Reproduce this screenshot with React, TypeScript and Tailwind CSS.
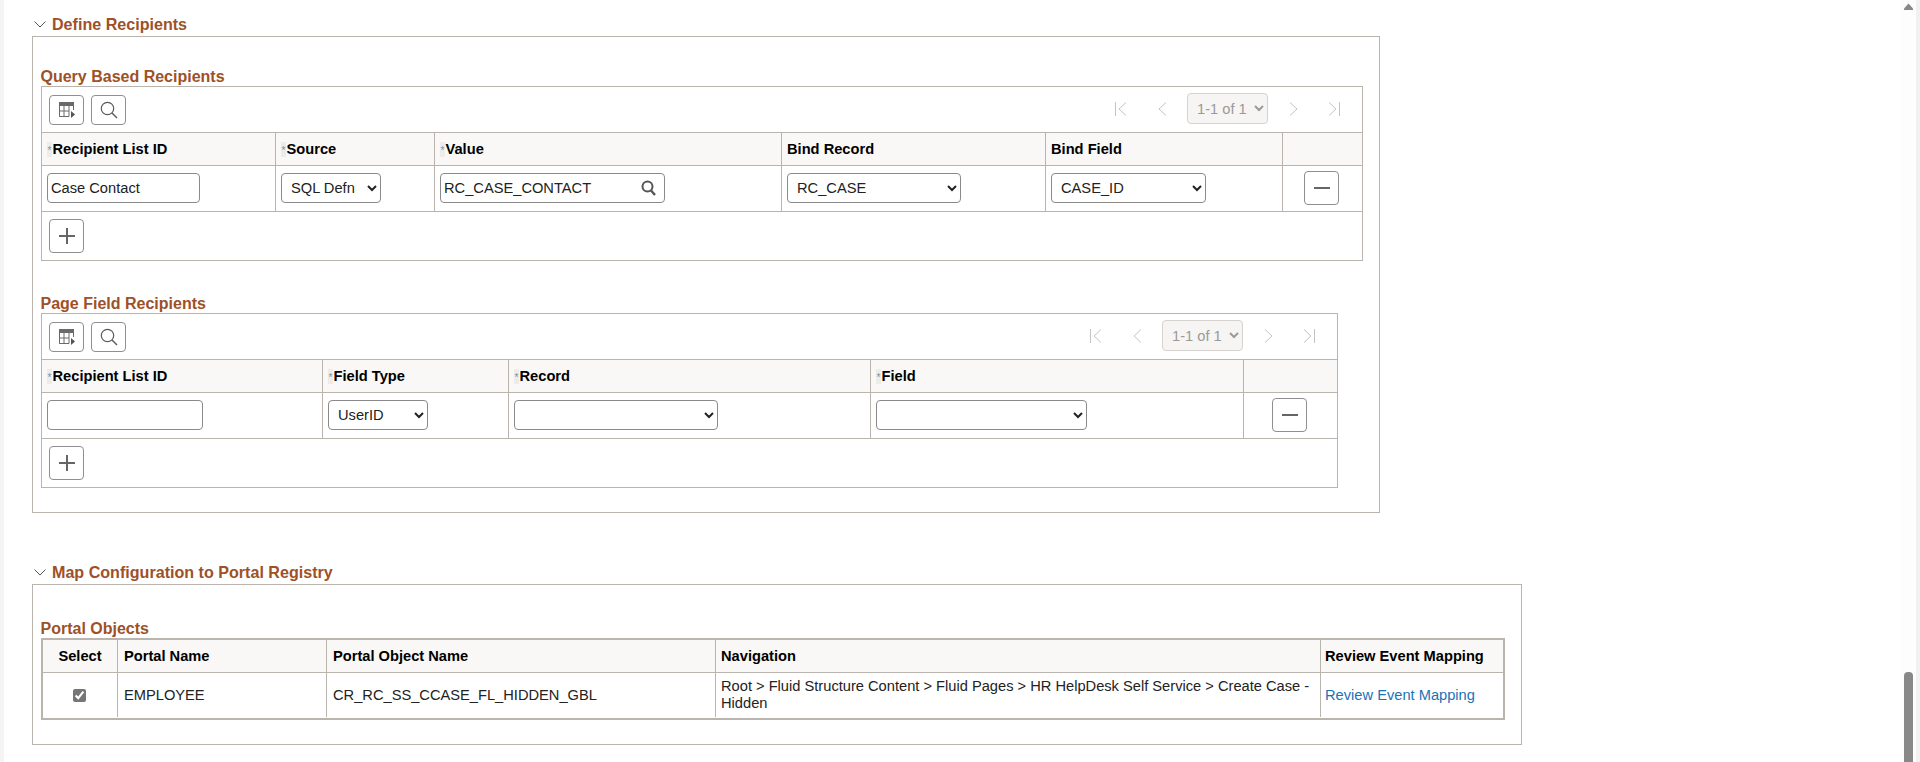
const font = { fontFamily: '"Liberation Sans", Arial, sans-serif' };

function SectionHeader({ title }: { title: string }) {
    return (
        <div className="flex h-[22px] items-center pb-[2px] pl-[30px]">
            <svg width="12" height="7" viewBox="0 0 12 7" fill="none">
                <path d="M0.5 0.5L6 6L11.5 0.5" stroke="#555" strokeWidth="1" />
            </svg>
            <span className="ml-[6px] text-[16.1px] font-bold leading-[20px] text-[#9e5127]">{title}</span>
        </div>
    );
}

function GroupTitle({ title }: { title: string }) {
    return (
        <div className="ml-[7.5px] h-[20px] text-[16px] font-bold leading-[22px] text-[#9e5127]">{title}</div>
    );
}

function IconButton({ children, className = '' }: { children: React.ReactNode; className?: string }) {
    return (
        <button
            type="button"
            className={`flex w-[35px] items-center justify-center rounded-[4px] border border-[#8f8f8f] bg-white ${className}`}
        >
            {children}
        </button>
    );
}

function GridIcon() {
    return (
        <svg width="16" height="16" viewBox="0 0 16 16" fill="none">
            <rect x="0" y="0" width="15" height="4" fill="#6a6a6a" />
            <path
                d="M0.5 4V14.5H10M0.5 9H10M0.5 14.5H10M5 4V14.5M10 4V14.5M14.5 4V8"
                stroke="#6a6a6a"
                strokeWidth="1"
            />
            <path d="M12 9L16 12.5L12 16Z" fill="#555" />
        </svg>
    );
}

function LensIcon() {
    return (
        <svg width="18" height="18" viewBox="0 0 18 18" fill="none">
            <circle cx="7.5" cy="7.5" r="6.2" stroke="#5a5a5a" strokeWidth="1.2" />
            <path d="M12 12L17 17" stroke="#5a5a5a" strokeWidth="1.4" />
        </svg>
    );
}

function Pager() {
    const stroke = '#c4c4c4';
    return (
        <div className="ml-auto mr-[22px] mt-[6px] flex items-start">
            <svg width="12" height="14" viewBox="0 0 12 14" fill="none" className="mt-[9px]">
                <path d="M0.5 0V14M11 0.5L4 7L11 13.5" stroke={stroke} />
            </svg>
            <svg width="12" height="14" viewBox="0 0 12 14" fill="none" className="ml-[29px] mt-[9px]">
                <path d="M10 0.5L3 7L10 13.5" stroke={stroke} />
            </svg>
            <select
                disabled
                defaultValue="1-1 of 1"
                className="ml-[19px] h-[31px] w-[81px] rounded-[4px] border border-[#d6d3ce] bg-[#f6f5f3] pl-[5px] text-[#9a9a9a] opacity-100"
            >
                <option>1-1 of 1</option>
            </select>
            <svg width="12" height="14" viewBox="0 0 12 14" fill="none" className="ml-[20px] mt-[9px]">
                <path d="M2 0.5L9 7L2 13.5" stroke={stroke} />
            </svg>
            <svg width="12" height="14" viewBox="0 0 12 14" fill="none" className="ml-[28px] mt-[9px]">
                <path d="M1 0.5L8 7L1 13.5M11.5 0V14" stroke={stroke} />
            </svg>
        </div>
    );
}

function Toolbar() {
    return (
        <div className="flex h-[46px] items-start border-b border-[#b9b5ae] pl-[7px]">
            <div className="mt-[8px] flex gap-[7px]">
                <IconButton className="h-[30px]">
                    <GridIcon />
                </IconButton>
                <IconButton className="h-[30px]">
                    <LensIcon />
                </IconButton>
            </div>
            <Pager />
        </div>
    );
}

function HeadCell({ label, required, last }: { label?: string; required?: boolean; last?: boolean }) {
    return (
        <div className={`flex items-center bg-[#f9f8f6] pl-[5px] ${last ? '' : 'border-r border-[#b9b5ae]'}`}>
            {required && (
                <span className="mr-[0.5px] flex h-[15px] w-[5px] justify-center bg-[#eeece9] pt-[3px] text-[10px] leading-[12px] text-[#6f93b8]">
                    *
                </span>
            )}
            {label && <span className="font-bold text-black">{label}</span>}
        </div>
    );
}

function BodyCell({ children, last }: { children?: React.ReactNode; last?: boolean }) {
    return (
        <div
            className={
                last
                    ? 'flex items-center justify-center pb-[1px] pr-[2px]'
                    : 'flex items-center border-r border-[#b9b5ae] pb-[1px] pl-[5px]'
            }
        >
            {children}
        </div>
    );
}

function Dropdown({ value, className }: { value: string; className: string }) {
    return (
        <select
            defaultValue={value}
            className={`h-[30px] rounded-[4px] border border-[#8a8a8a] bg-white pl-[5px] text-[#222] ${className}`}
        >
            <option>{value}</option>
        </select>
    );
}

function TextField({ value, className }: { value: string; className: string }) {
    return (
        <input
            readOnly
            value={value}
            className={`h-[30px] rounded-[4px] border border-[#8a8a8a] bg-white pl-[3px] text-[#222] outline-none ${className}`}
        />
    );
}

function RemoveButton() {
    return (
        <IconButton className="h-[34px]">
            <span className="block h-[2px] w-[16px] bg-[#666]" />
        </IconButton>
    );
}

function AddRow() {
    return (
        <div className="h-[48px] pl-[7px] pt-[7px]">
            <IconButton className="h-[34px]">
                <svg width="16" height="16" viewBox="0 0 16 16" fill="none">
                    <path d="M8 0V16M0 8H16" stroke="#666" strokeWidth="2" />
                </svg>
            </IconButton>
        </div>
    );
}

function QueryTable() {
    return (
        <div className="ml-[8px] w-[1322px] border border-[#b9b5ae]">
            <Toolbar />
            <div className="grid h-[33px] grid-cols-[234px_159px_347px_264px_237px_1fr] border-b border-[#b9b5ae]">
                <HeadCell label="Recipient List ID" required />
                <HeadCell label="Source" required />
                <HeadCell label="Value" required />
                <HeadCell label="Bind Record" />
                <HeadCell label="Bind Field" />
                <HeadCell last />
            </div>
            <div className="grid h-[46px] grid-cols-[234px_159px_347px_264px_237px_1fr] border-b border-[#b9b5ae]">
                <BodyCell>
                    <TextField value="Case Contact" className="w-[153px]" />
                </BodyCell>
                <BodyCell>
                    <Dropdown value="SQL Defn" className="w-[100px]" />
                </BodyCell>
                <BodyCell>
                    <div className="flex h-[30px] w-[225px] items-center rounded-[4px] border border-[#8a8a8a] pr-[8px]">
                        <input readOnly value="RC_CASE_CONTACT" className="min-w-0 flex-1 pl-[3px] text-[#222] outline-none" />
                        <svg width="15" height="16" viewBox="0 0 15 16" fill="none">
                            <circle cx="6.5" cy="6.5" r="5" stroke="#555" strokeWidth="2" />
                            <path d="M10 10.5L14 15" stroke="#555" strokeWidth="2.4" />
                        </svg>
                    </div>
                </BodyCell>
                <BodyCell>
                    <Dropdown value="RC_CASE" className="w-[174px]" />
                </BodyCell>
                <BodyCell>
                    <Dropdown value="CASE_ID" className="w-[155px]" />
                </BodyCell>
                <BodyCell last>
                    <RemoveButton />
                </BodyCell>
            </div>
            <AddRow />
        </div>
    );
}

function PageFieldTable() {
    return (
        <div className="ml-[8px] w-[1297px] border border-[#b9b5ae]">
            <Toolbar />
            <div className="grid h-[33px] grid-cols-[281px_186px_362px_373px_1fr] border-b border-[#b9b5ae]">
                <HeadCell label="Recipient List ID" required />
                <HeadCell label="Field Type" required />
                <HeadCell label="Record" required />
                <HeadCell label="Field" required />
                <HeadCell last />
            </div>
            <div className="grid h-[46px] grid-cols-[281px_186px_362px_373px_1fr] border-b border-[#b9b5ae]">
                <BodyCell>
                    <TextField value="" className="w-[156px]" />
                </BodyCell>
                <BodyCell>
                    <Dropdown value="UserID" className="w-[100px]" />
                </BodyCell>
                <BodyCell>
                    <Dropdown value="" className="w-[204px]" />
                </BodyCell>
                <BodyCell>
                    <Dropdown value="" className="w-[211px]" />
                </BodyCell>
                <BodyCell last>
                    <RemoveButton />
                </BodyCell>
            </div>
            <AddRow />
        </div>
    );
}

function PortalTable() {
    const cols = 'grid grid-cols-[75px_209px_389px_605px_1fr]';
    return (
        <div className="ml-[8px] w-[1464px] border-2 border-[#b9b5ae]">
            <div className={`${cols} h-[33px] border-b border-[#b9b5ae] bg-[#f9f8f6] font-bold text-black`}>
                <div className="flex items-center justify-center border-r border-[#b9b5ae]">Select</div>
                <div className="flex items-center border-r border-[#b9b5ae] pl-[6px]">Portal Name</div>
                <div className="flex items-center border-r border-[#b9b5ae] pl-[6px]">Portal Object Name</div>
                <div className="flex items-center border-r border-[#b9b5ae] pl-[5px]">Navigation</div>
                <div className="flex items-center pl-[4px]">Review Event Mapping</div>
            </div>
            <div className={`${cols} h-[45px] pb-[1px] text-[#222]`}>
                <div className="flex items-center justify-center border-r border-[#b9b5ae] pr-[1px]">
                    <input type="checkbox" checked readOnly className="h-[13px] w-[13px] accent-[#767676]" />
                </div>
                <div className="flex items-center border-r border-[#b9b5ae] pl-[6px]">EMPLOYEE</div>
                <div className="flex items-center border-r border-[#b9b5ae] pl-[6px]">CR_RC_SS_CCASE_FL_HIDDEN_GBL</div>
                <div className="flex items-center border-r border-[#b9b5ae] pl-[5px] leading-[17px]">
                    Root &gt; Fluid Structure Content &gt; Fluid Pages &gt; HR HelpDesk Self Service &gt; Create Case - Hidden
                </div>
                <div className="flex items-center pl-[4px]">
                    <a href="#" className="text-[#1a72b8]">
                        Review Event Mapping
                    </a>
                </div>
            </div>
        </div>
    );
}

export default function App() {
    return (
        <div style={font} className="flex h-[762px] w-[1920px] overflow-hidden bg-white text-[14.67px]">
            <div className="w-[4px] bg-[#f4f4f4]" />
            <div className="flex-1 pt-[14px]">
                <SectionHeader title="Define Recipients" />
                <div className="ml-[28px] w-[1348px] border border-[#b9b5ae] pb-[24px] pt-[29px]">
                    <GroupTitle title="Query Based Recipients" />
                    <QueryTable />
                    <div className="mt-[32px]">
                        <GroupTitle title="Page Field Recipients" />
                        <PageFieldTable />
                    </div>
                </div>
                <div className="mt-[49px]">
                    <SectionHeader title="Map Configuration to Portal Registry" />
                    <div className="ml-[28px] w-[1490px] border border-[#b9b5ae] pb-[24px] pt-[33px]">
                        <GroupTitle title="Portal Objects" />
                        <PortalTable />
                    </div>
                </div>
            </div>
            <div className="flex w-[15px] flex-col items-center bg-[#fdfdfd] pt-[3px]">
                <svg width="9" height="7" viewBox="0 0 9 7">
                    <path d="M4.5 0.5L9 5.5V7H0V5.5Z" fill="#888" />
                </svg>
                <div className="mt-[662px] h-[90px] w-[9px] rounded-t-[4px] bg-[#888]" />
            </div>
            <div className="w-[4px] bg-[#f1f1f1]" />
        </div>
    );
}
